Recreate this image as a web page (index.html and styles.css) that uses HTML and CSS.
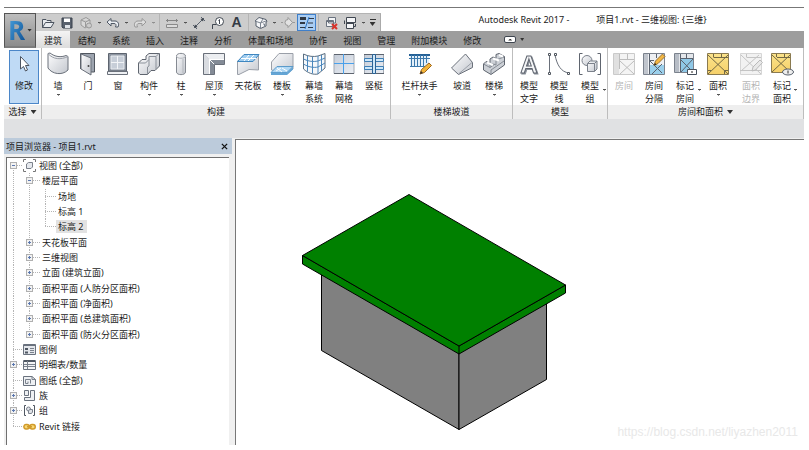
FILE: index.html
```html
<!DOCTYPE html>
<html lang="zh-CN">
<head>
<meta charset="utf-8">
<title>Autodesk Revit 2017</title>
<link rel="stylesheet" href="styles.css">
</head>
<body>
<svg class="defs" aria-hidden="true">
  <defs>
    <linearGradient id="steel" x1="0" y1="0" x2="1" y2="1"><stop offset="0" stop-color="#fdfdfe"/><stop offset="1" stop-color="#c3c7ce"/></linearGradient>
    <linearGradient id="glass" x1="0" y1="0" x2="1" y2="1"><stop offset="0" stop-color="#c4ccd8"/><stop offset="1" stop-color="#eceff4"/></linearGradient>
    <linearGradient id="gold" x1="0" y1="0" x2="0" y2="1"><stop offset="0" stop-color="#fbe38b"/><stop offset="1" stop-color="#f6d069"/></linearGradient>
  </defs>
</svg>
<div class="app">
  <header class="header">
    <button class="app-button" aria-label="应用程序菜单"><span class="logo">R</span><i class="caret big"></i></button>
    <div class="titlebar">
      <div class="qat">
        <button class="q" aria-label="打开"><svg viewBox="0 0 14 14"><path d="M1.500 11.500V3.500H5L6 4.500H10V6.500M1.500 11.500L4.500 6.500H13L10 11.500Z" fill="#e8ebef" stroke="#4b535f"/></svg></button>
        <button class="q" aria-label="保存"><svg viewBox="0 0 14 14"><path d="M2 2H12V12H3L2 11Z" fill="#59616d" stroke="#3a424e"/><path d="M4 2.500H10V6H4Z" fill="#fff"/><path d="M5 9H10V12H5Z" fill="#dfe3e8"/></svg></button>
        <button class="q" aria-label="同步"><svg viewBox="0 0 14 14"><path d="M2 4L7 1.500L11 4V9L6 12L2 9ZM2 4L6.500 6L11 4M6.500 6V11" fill="#d8d8d8" stroke="#999"/><circle cx="10" cy="9.500" r="2.500" fill="#ccc" stroke="#999"/></svg></button>
        <i class="caret"></i>
        <button class="q" aria-label="放弃"><svg viewBox="0 0 14 14"><path d="M1 6L5 2.500V5H9C12 5 13.500 8 12 11H9.500C10.500 9 10 7.500 8 7.500H5V10Z" fill="#eceff3" stroke="#4f5865"/></svg></button>
        <i class="caret"></i>
        <button class="q" aria-label="重做"><svg viewBox="0 0 14 14"><path d="M13 6L9 2.500V5H5C2 5 .5 8 2 11H4.500C3.500 9 4 7.500 6 7.500H9V10Z" fill="#ddd" stroke="#999"/></svg></button>
        <i class="caret dim"></i>
        <i class="sep"></i>
        <button class="q" aria-label="测量"><svg viewBox="0 0 14 14"><path d="M1 4.500H13M2.500 3V6M11.500 3V6" fill="none" stroke="#858585"/><path d="M1.500 8.500H12.500V11.500H1.500Z" fill="#dcdcdc" stroke="#8a8a8a"/></svg></button>
        <i class="caret"></i>
        <button class="q" aria-label="对齐尺寸标注"><svg viewBox="0 0 14 14"><path d="M2.500 11.500L11.500 2.500M1 9L5 13M9 1L13 5" fill="none" stroke="#5a626d"/><path d="M2 12L3 8.500L5.500 11ZM12 2L8.500 3L11 5.500Z" fill="#3f4650"/></svg></button>
        <button class="q" aria-label="按类别标记"><svg viewBox="0 0 14 14"><path d="M1.500 13V8.500H5" fill="none" stroke="#3f4650"/><circle cx="8.500" cy="5.500" r="4" fill="#fff" stroke="#3f4650"/><path d="M7.500 4.500L8.500 3.500V8" stroke="#3f4650" fill="none"/></svg></button>
        <button class="q letter" aria-label="文字">A</button>
        <i class="sep"></i>
        <button class="q" aria-label="默认三维视图"><svg viewBox="0 0 14 14"><path d="M1 5L5 1.500L12 3.500L13 5.500L12 6V10L6.500 12.500L2 10V6Z" fill="#f5f6f8" stroke="#555e6b"/><path d="M1 5L6.500 7L9 3M6.500 7V12.500M6.500 7L12 5M9 8H10.500V11" fill="none" stroke="#7d8590"/></svg></button>
        <i class="caret"></i>
        <button class="q" aria-label="剖面"><svg viewBox="0 0 14 14"><path d="M7 1.500L11.500 6.500L7 11.500V9.500A3 3 0 1 1 7 3.500Z" fill="#e2e2e2" stroke="#999"/><path d="M0 6.500H2M11.500 6.500H14" stroke="#999"/></svg></button>
        <button class="q pressed" aria-label="细线" aria-pressed="true"><svg viewBox="0 0 14 14"><path d="M0 2.500H6" stroke="#303945" stroke-width="3"/><path d="M0 7H5" stroke="#303945" stroke-width="2"/><path d="M0 11.500H5M9 2.500H14M8 7H13M8 11.500H13" stroke="#303945"/><path d="M9 1L5 13" stroke="#2b74c4"/></svg></button>
        <i class="sep"></i>
        <button class="q" aria-label="关闭隐藏窗口"><svg viewBox="0 0 14 14"><path d="M4.500 1.500H11.500V7H4.500ZM2.500 4.500H9.500V10.500H2.500Z" fill="#f4f5f7" stroke="#6a727e"/><path d="M2.500 5.500H9.500" stroke="#6a727e"/><path d="M8 8L13 13M13 8L8 13" stroke="#d7332b" stroke-width="2"/></svg></button>
        <button class="q" aria-label="切换窗口"><svg viewBox="0 0 14 14"><path d="M3.500 1.500H12.500V6.500H3.500Z" fill="#f4f5f7" stroke="#3f4650"/><path d="M1.500 7V4.500M1 7.500H2M12.500 8V10.500H11" fill="none" stroke="#3f4650"/><path d="M3.500 6.500H10.500V12.500H3.500Z" fill="#f4f5f7" stroke="#3f4650"/><path d="M3.500 7.500H10.500" stroke="#3f4650"/></svg></button>
        <i class="caret"></i>
        <button class="q customize" aria-label="自定义快速访问工具栏"><i class="bar"></i><i class="caret big"></i></button>
      </div>
      <div class="title"><span>Autodesk Revit 2017 -</span><span>项目1.rvt - 三维视图: {三维}</span></div>
    </div>
    <nav class="tabs">
      <button class="tab active">建筑</button><button class="tab">结构</button><button class="tab">系统</button><button class="tab">插入</button><button class="tab">注释</button><button class="tab">分析</button><button class="tab">体量和场地</button><button class="tab">协作</button><button class="tab">视图</button><button class="tab">管理</button><button class="tab">附加模块</button><button class="tab">修改</button>
      <button class="minimize" aria-label="最小化功能区"><i class="pill"><i class="up"></i></i><i class="caret big"></i></button>
    </nav>
  </header>

  <main class="ribbon">
    <section class="panel select">
      <div class="tools">
        <button class="tool chosen"><svg viewBox="0 0 24 24"><path d="M8.500 4.500V17L11.500 14.500L13.500 19L15.500 18L13.500 13.500H17Z" fill="#fff" stroke="#4d5561"/></svg><span>修改</span></button>
      </div>
      <h2>选择<i class="caret big"></i></h2>
    </section>
    <section class="panel">
      <div class="tools">
        <button class="tool"><svg viewBox="0 0 24 24"><path d="M2 1.500L4 1C9 5 15 5.500 20 3.500L22 4.500V18C16 24 6 22 2 16Z" fill="url(#steel)" stroke="#6a707a"/><path d="M2 1.500C7 7.500 15 8 22 4.500" fill="none" stroke="#9a9fa8"/></svg><span>墙</span><i class="caret"></i></button>
        <button class="tool"><svg viewBox="0 0 24 24"><path d="M4.500 17V1.500H18.500V20H15" fill="#9da4af" stroke="#50565f"/><path d="M5 2L15 6V23L5 17Z" fill="url(#steel)" stroke="#6a707a"/><circle cx="12.500" cy="14" r="1" fill="#444"/></svg><span>门</span></button>
        <button class="tool"><svg viewBox="0 0 24 24"><path d="M2.500 1.500H20.500V19H2.500Z" fill="#8e96a2" stroke="#5d646f"/><path d="M5 4H18V17H5Z" fill="#c7ced8" stroke="#e9ecf0"/><path d="M11.500 4V17M5 10.500H18" stroke="#f2f4f7"/><path d="M1.500 19.500H21.500V22.500H1.500Z" fill="#eef0f3" stroke="#6a707a"/></svg><span>窗</span></button>
        <button class="tool medium"><svg viewBox="0 0 24 24"><path d="M1.500 11L5 7.500H9V4L12 1.500H22.500V14L18 18.500H14L10.500 22.500H3L1.500 21Z" fill="url(#steel)" stroke="#5f656f" stroke-linejoin="round"/><path d="M1.500 11H8.500L12 7.500V4.500H19L22 1.500M19 4.500V17M12 7.500V14L10.500 15V22" fill="none" stroke="#8b919a"/></svg><span>构件</span><i class="caret"></i></button>
        <button class="tool medium"><svg viewBox="0 0 24 24"><path d="M7.500 4C7.500 .5 16.500 .5 16.500 4V20C16.500 23.500 7.500 23.500 7.500 20Z" fill="url(#steel)" stroke="#858a92"/><path d="M7.500 4C7.500 7 16.500 7 16.500 4M14 7V21" fill="none" stroke="#b3b7bd"/></svg><span>柱</span><i class="caret"></i></button>
        <button class="tool large"><svg viewBox="0 0 24 24"><path d="M1.500 1.500H22.500V12.500H12.500V22.500H1.500Z" fill="#b0b5bd"/><path d="M1.500 1.500L7.500 7.500H22.500V1.500Z" fill="#eceef1"/><path d="M1.500 1.500L7.500 7.500V22.500H1.500Z" fill="#d9dce1"/><path d="M7.500 7.500H22V12.500H12.500V22H7.500Z" fill="#838b96"/><path d="M7.500 7.500L12.500 12.500M7.500 22V7.500H22" stroke="#fff" fill="none"/><path d="M1.500 1.500H22.500V12.500H12.500V22.500H1.500Z" fill="none" stroke="#6a707a"/></svg><span>屋顶</span><i class="caret"></i></button>
        <button class="tool large"><svg viewBox="0 0 24 24"><path d="M1.500 9V22.500H3L13 17.500L22.500 18V3Z" fill="url(#steel)" stroke="#9a9fa8"/><path d="M8 2.500H23L17 9.500H1.500Z" fill="#9fcdf0" stroke="#3e86c0"/><path d="M13 3L8 9M18 3L12 9M5 6.500H20" stroke="#fff"/></svg><span>天花板</span></button>
        <button class="tool large"><svg viewBox="0 0 24 24"><path d="M1.500 18V10L9 1.500H23V17L17 22Z" fill="url(#steel)" stroke="#9a9fa8"/><path d="M7 14.500H23L17 20.500H1Z" fill="#b1d8f4" stroke="#5c9bca"/><path d="M1 20.500V23H17L23 17.500V15L17 20.500Z" fill="#64a5d5"/><path d="M7 16L12 20M12 16L17 19M6 19L11 16" stroke="#fff"/></svg><span>楼板</span><i class="caret"></i></button>
        <button class="tool"><svg viewBox="0 0 24 24"><path d="M1.500 2C6 4.500 12 5 16 4L23 1.500V16L16 22C11 23 6 21 1.500 17Z" fill="#f5f8fb" stroke="#5b6f82"/><path d="M16 4V22M1.500 7C6 9.500 12 10 16 9L23 6M1.500 12C6 15 12 16 16 15L23 11M5.500 4V19.500M10.500 5V21.500M19.500 3V19" fill="none" stroke="#4a86bb"/></svg><span>幕墙<br>系统</span></button>
        <button class="tool"><svg viewBox="0 0 24 24"><path d="M2 2.500H22V21.500H2Z" fill="url(#glass)" stroke="#a3a9b2"/><path d="M2 2.500H22M2 21.500H22" stroke="#5d646f"/><path d="M11.500 2V22M2 11.500H22" stroke="#4aa0ea"/></svg><span>幕墙<br>网格</span></button>
        <button class="tool"><svg viewBox="0 0 24 24"><path d="M2.500 2.500H21.500V21.500H2.500Z" fill="url(#glass)" stroke="#a3a9b2"/><path d="M2 2.500H22M2 21.500H22" stroke="#5d646f"/><path d="M2.500 6.500H21.500V9.500H2.500ZM2.500 14.500H21.500V17.500H2.500Z" fill="#cfe7f8" stroke="#3f7fb5"/><path d="M10.500 2.500H13.500V21.500H10.500Z" fill="#cfe7f8" stroke="#2b6294"/></svg><span>竖梃</span></button>
      </div>
      <h2>构建</h2>
    </section>
    <section class="panel">
      <div class="tools">
        <button class="tool wide"><svg viewBox="0 0 24 24"><path d="M2 3H21V15H2Z" fill="#e4f0fa"/><path d="M1 3H22" stroke="#246096" stroke-width="2"/><path d="M1 6.500H22M2 14.500H17M3.500 3V15M6.500 3V15M9.500 3V15M12.500 3V15M15.500 3V15M18.500 3V11" stroke="#3b78ab"/><path d="M12 22L13.500 17.500L21 11L23.500 13.500L16.500 20.500Z" fill="#f3b437" stroke="#9c651f"/><path d="M12 22L13 19L15 21Z" fill="#333"/></svg><span>栏杆扶手</span><i class="caret"></i></button>
        <button class="tool"><svg viewBox="0 0 24 24"><path d="M1.500 16L15.500 2L22.500 10.500V15.500L8.500 22.500Z" fill="url(#steel)" stroke="#6a707a" stroke-linejoin="round"/><path d="M8.500 22L22 10.500" stroke="#9a9fa8"/></svg><span>坡道</span></button>
        <button class="tool large"><svg viewBox="0 0 24 24"><path d="M1.500 12L4 9.500L8 11V7L11 5L14 6.500V2.500L17 1.500L22.500 4.500V13L9 22.500L1.500 18Z" fill="#ccd0d6" stroke="#5f656f" stroke-linejoin="round"/><path d="M1.500 12L8 15.500V11L14 13V8L22 5M8 15.500L13 12M9 22V18L22 9" fill="none" stroke="#868c95"/><path d="M5 10.500L11 13M11 6.500L17 8.500M17 3L21 4.500" stroke="#fff" stroke-width="2"/></svg><span>楼梯</span><i class="caret"></i></button>
      </div>
      <h2>楼梯坡道</h2>
    </section>
    <section class="panel">
      <div class="tools">
        <button class="tool"><svg class="solid" viewBox="0 0 24 24"><text x="12" y="21">A</text></svg><span>模型<br>文字</span></button>
        <button class="tool"><svg viewBox="0 0 24 24"><path d="M2.500 3V21M8 3C10 13 14 20 22 21" fill="none" stroke="#6a707a"/><path d="M1.500 1.500H3.500V3.500H1.500ZM1.500 20.500H3.500V22.500H1.500ZM7.500 1.500H9.500V3.500H7.500ZM20.500 20.500H22.500V22.500H20.500Z" fill="#fff" stroke="#50565f"/></svg><span>模型<br>线</span></button>
        <button class="tool medium side"><svg viewBox="0 0 24 24"><path d="M4.500 1.500H1.500V22.500H4.500M19.500 1.500H22.500V22.500H19.500" fill="none" stroke="#5f656f"/><circle cx="9" cy="8.500" r="5" fill="url(#steel)" stroke="#7b818b"/><path d="M9.500 11.500L12 9H19V17L16.500 19.500H9.500ZM9.500 11.500H16.500V19.500M16.500 11.500L19 9" fill="url(#steel)" stroke="#7b818b"/></svg><span>模型<br>组</span><i class="caret"></i></button>
      </div>
      <h2>模型</h2>
    </section>
    <section class="panel last">
      <div class="tools">
        <button class="tool" disabled><svg viewBox="0 0 24 24"><path d="M1.500 1.500H22.500V22.500H1.500Z" fill="#f4f4f4" stroke="#cacaca"/><path d="M2 2H7V22H2Z" fill="#e0e0e0"/><path d="M7.500 2V17M7.500 7.500H22M8 9L22 22M22 9L8 22M15.500 2V8" fill="none" stroke="#bdbdbd"/></svg><span>房间</span></button>
        <button class="tool"><svg viewBox="0 0 24 24"><path d="M1.500 1.500H22.500V22.500H1.500Z" fill="#eef0f3" stroke="#7b828d"/><path d="M2 2H6V22H2Z" fill="#c0c5cd"/><path d="M7 13H22V22H7Z" fill="#9bd0ec"/><path d="M7.500 2V22M7 8.500H12M8 9L20 21M20 12L10 22M14.500 2V6" fill="none" stroke="#5a626e"/><path d="M12 13.500L13.500 9L20.500 2L23 4.500L16 11.500Z" fill="#f3b743" stroke="#9a7434"/><path d="M12 13.500L13 11L14.500 12.500Z" fill="#222"/></svg><span>房间<br>分隔</span></button>
        <button class="tool medium side"><svg viewBox="0 0 24 24"><path d="M1.500 1.500H20.500V20.500H1.500Z" fill="#e4e7eb" stroke="#7b828d"/><path d="M2 2H6V20H2Z" fill="#b7bdc6"/><path d="M8 7H20V20H8Z" fill="#8fc8e7"/><path d="M7.500 2V20M7 6.500H20M8 8L20 20M20 7L8 20M13.500 2V7" fill="none" stroke="#5a626e"/><path d="M14.500 17.500H23.500V22.500H14.500Z" fill="#fff" stroke="#47505c"/><path d="M19 19V21" stroke="#222"/></svg><span>标记<br>房间</span><i class="caret"></i></button>
        <button class="tool large"><svg viewBox="0 0 24 24"><path d="M1.500 1.500H22.500V22.500H1.500Z" fill="url(#gold)" stroke="#8a7a50"/><path d="M7.500 2V5M7.500 5.500H22M15.500 2V5M2 22L22 3M2 3L22 22M2 18.500H5M22 18.500H18.500V22" fill="none" stroke="#736944"/></svg><span>面积</span><i class="caret"></i></button>
        <button class="tool medium" disabled><svg viewBox="0 0 24 24"><path d="M1.500 1.500H22.500V22.500H1.500Z" fill="#f2f2f2" stroke="#d6d6d6"/><path d="M7.500 2V5M7.500 5.500H22M2 19L20 3M2 3L22 22M1 18.500H22" fill="none" stroke="#c4c4c4"/><path d="M13 19L14 15L21 8L23.500 10.500L16.500 18Z" fill="#e8e8e8" stroke="#b9b9b9"/></svg><span>面积<br>边界</span></button>
        <button class="tool side"><svg viewBox="0 0 24 24"><path d="M1.500 1.500H20.500V20.500H1.500Z" fill="url(#gold)" stroke="#8a7a50"/><path d="M6.500 2V5M7 5.500H20M14.500 2V5M2 20L20 3M2 3L20 20" fill="none" stroke="#736944"/><ellipse cx="18" cy="20" rx="5.500" ry="3" fill="#eee" stroke="#59616d"/><path d="M18 18.500V21.500" stroke="#333"/></svg><span>标记<br>面积</span><i class="caret"></i></button>
      </div>
      <h2>房间和面积<i class="caret big"></i></h2>
    </section>
  </main>

  <div class="options"></div>

  <div class="workspace">
    <aside class="browser">
      <div class="browser-head"><span>项目浏览器 - 项目1.rvt</span><button aria-label="关闭"><svg viewBox="0 0 8 8"><path d="M1 1L7 7M7 1L1 7" stroke="#111" stroke-width="1.500"/></svg></button></div>
      <ul class="tree" role="tree">
        <li role="treeitem" aria-level="1" aria-expanded="true"><i class="node first"><button class="exp minus" aria-label="折叠"></button></i><svg viewBox="0 0 13 13"><path d="M3 .5H.5V3M10 .5H12.500V3M3 12.500H.5V10M10 12.500H12.500V10" fill="none" stroke="#777"/><path d="M3.500 5L5.500 3.500H9.500V8L8 9.500H3.500Z" fill="#e6e9ee" stroke="#7b818b"/></svg><span>视图 (全部)</span></li>
        <li role="treeitem" aria-level="2" aria-expanded="true"><i class="pass"></i><i class="node long"><button class="exp minus" aria-label="折叠"></button></i><span>楼层平面</span></li>
        <li role="treeitem" aria-level="3"><i class="pass"></i><i class="pass"></i><i class="node long"></i><span>场地</span></li>
        <li role="treeitem" aria-level="3"><i class="pass"></i><i class="pass"></i><i class="node long"></i><span>标高 1</span></li>
        <li role="treeitem" aria-level="3" aria-selected="true"><i class="pass"></i><i class="pass"></i><i class="node long end"></i><span class="picked">标高 2</span></li>
        <li role="treeitem" aria-level="2"><i class="pass"></i><i class="node long"><button class="exp" aria-label="展开"></button></i><span>天花板平面</span></li>
        <li role="treeitem" aria-level="2"><i class="pass"></i><i class="node long"><button class="exp" aria-label="展开"></button></i><span>三维视图</span></li>
        <li role="treeitem" aria-level="2"><i class="pass"></i><i class="node long"><button class="exp" aria-label="展开"></button></i><span>立面 (建筑立面)</span></li>
        <li role="treeitem" aria-level="2"><i class="pass"></i><i class="node long"><button class="exp" aria-label="展开"></button></i><span>面积平面 (人防分区面积)</span></li>
        <li role="treeitem" aria-level="2"><i class="pass"></i><i class="node long"><button class="exp" aria-label="展开"></button></i><span>面积平面 (净面积)</span></li>
        <li role="treeitem" aria-level="2"><i class="pass"></i><i class="node long"><button class="exp" aria-label="展开"></button></i><span>面积平面 (总建筑面积)</span></li>
        <li role="treeitem" aria-level="2"><i class="pass"></i><i class="node long end"><button class="exp" aria-label="展开"></button></i><span>面积平面 (防火分区面积)</span></li>
        <li role="treeitem" aria-level="1"><i class="node"></i><svg viewBox="0 0 13 13"><path d="M.5 1.500H12.500V11.500H.5Z" fill="#e3e6eb" stroke="#6a727e"/><path d="M1 2H12" stroke="#6a727e" stroke-width="2"/><path d="M2 5H5V7H2ZM2 8.500H5V10.500H2Z" fill="#4f5762"/><path d="M7 5.500H11M7 7.500H11M7 9.500H11" stroke="#7b828d"/></svg><span>图例</span></li>
        <li role="treeitem" aria-level="1"><i class="node"><button class="exp" aria-label="展开"></button></i><svg viewBox="0 0 13 13"><path d="M.5 2.500H12.500V11.500H.5Z" fill="#f3f4f6" stroke="#6a727e"/><path d="M1 3H12" stroke="#4f5762" stroke-width="2"/><path d="M1 6.500H12M1 8.500H12M4.500 3V11" stroke="#7b828d"/></svg><span>明细表/数量</span></li>
        <li role="treeitem" aria-level="1"><i class="node"></i><svg viewBox="0 0 13 13"><path d="M.5 2.500H9L12.500 5.500V11.500H.5Z" fill="#eef0f3" stroke="#6a727e"/><path d="M9 2.500V5.500H12.500M2.500 5.500H7.500V9.500M2.500 5.500V9.500H5V7.500" fill="none" stroke="#7b828d"/></svg><span>图纸 (全部)</span></li>
        <li role="treeitem" aria-level="1"><i class="node"><button class="exp" aria-label="展开"></button></i><svg viewBox="0 0 13 13"><path d="M1.500 1.500H5.500V6.500H1.500ZM7.500 1.500H11.500V11.500H1.500V8.500H7.500Z" fill="#eef0f3" stroke="#6a727e"/></svg><span>族</span></li>
        <li role="treeitem" aria-level="1"><i class="node"><button class="exp" aria-label="展开"></button></i><svg viewBox="0 0 13 13"><path d="M3 1.500H1.500V11.500H3M10 1.500H11.500V11.500H10" fill="none" stroke="#4f5762"/><circle cx="5.500" cy="5" r="2" fill="#dfe2e7" stroke="#7b828d"/><path d="M5.500 6.500L7 5.500H9.500V8L8.500 9.500H5.500Z" fill="#dfe2e7" stroke="#7b828d"/></svg><span>组</span></li>
        <li role="treeitem" aria-level="1"><i class="node end"></i><svg viewBox="0 0 13 13"><path d="M1 6.500A2 2 0 0 1 3 4.500H4A2 2 0 0 1 4 9H3A2 2 0 0 1 1 6.500ZM7 6.500A2 2 0 0 1 9 4.500H10A2 2 0 0 1 10 9H9A2 2 0 0 1 7 6.500ZM4 6.700H9" fill="#f8d774" stroke="#d09a2a" stroke-width="1.500"/></svg><span>Revit 链接</span></li>
      </ul>
    </aside>
    <section class="canvas">
      <svg class="model" viewBox="236 140 568 305" preserveAspectRatio="xMidYMid meet" role="img" aria-label="三维模型">
        <g stroke="#000" stroke-linejoin="round">
          <path d="M321.500 270V350.500L459 429.500V348Z" fill="#808080"/>
          <path d="M459 348V429.500L546.500 379.500V298Z" fill="#808080"/>
          <path d="M302.500 255.500L459 346L565.500 285V293L459 354L302.500 264Z" fill="#008000"/>
          <path d="M409 194.500L565.500 285L459 346L302.500 255.500Z" fill="#008000"/>
          <path d="M459 346V354"/>
        </g>
      </svg>
      <span class="watermark">https://blog.csdn.net/liyazhen2011</span>
    </section>
  </div>
</div>
</body>
</html>
```
FILE: styles.css
```css
* { box-sizing: border-box; }
body {
  margin: 0;
  background: #fff;
  color: #1a1a1a;
  font: 9px/13px "Noto Sans", "Noto Sans CJK SC", sans-serif;
}
button {
  margin: 0;
  padding: 0;
  border: 0;
  background: none;
  color: inherit;
  font: inherit;
}
svg { display: block; flex: none; }
.defs { position: absolute; width: 0; height: 0; }

.app {
  display: flex;
  flex-direction: column;
  min-height: 100vh;
  padding: 7px 5px 5px 4px;
}

.caret {
  flex: none;
  width: 8px;
  height: 2px;
  background:
    linear-gradient(#555, #555) 50% 0 / 3px 1px no-repeat,
    linear-gradient(#999, #999) 50% 1px / 1px 1px no-repeat;
}
.caret.dim { opacity: .5; }
.caret.big {
  width: 6px;
  height: 4px;
  background: #333;
  clip-path: polygon(0 0, 100% 0, 50% 100%);
}

/* Title bar and tabs */
.header {
  display: grid;
  grid-template-columns: 32px 1fr;
  grid-template-rows: 23px 17px;
  border-top: 1px solid #777;
}
.app-button {
  grid-row: 1 / 3;
  margin-top: 5px;
  display: flex;
  align-items: center;
  justify-content: center;
  gap: 2px;
  background: linear-gradient(#bdbdbd, #8c8c8c);
  border: 1px solid #555;
  border-bottom: 2px solid #7d7d7d;
}
.app-button .caret { width: 5px; height: 3px; }
.logo {
  font: bold 26px/28px "Open Sans", sans-serif;
  color: #1b6cb4;
  background: linear-gradient(120deg, #4ba3e0, #0d4f92);
  background-clip: text;
  -webkit-text-fill-color: transparent;
}
.titlebar { display: flex; align-items: stretch; }
.qat {
  display: flex;
  align-items: center;
  margin-top: 5px;
  padding: 0 2px;
  background: #cdcdcd;
  border-top: 1px solid #b4b4b4;
  border-right: 1px solid #aaa;
}
.q {
  display: flex;
  align-items: center;
  justify-content: center;
  width: 19px;
  height: 17px;
}
.q svg { width: 14px; height: 14px; }
.q.letter { font: bold 14px/17px "Liberation Sans", sans-serif; color: #343b45; }
.q.pressed { background: #a9cdf3; border: 1px solid #3f7fca; }
.q.customize { flex-direction: column; gap: 2px; width: 11px; }
.bar { width: 6px; height: 1px; background: #333; }
.sep {
  width: 5px;
  height: 17px;
  background: linear-gradient(#b5b5b5, #b5b5b5) center / 1px 100% no-repeat;
}
.title {
  flex: 1;
  display: flex;
  align-items: center;
  justify-content: center;
  gap: 27px;
  white-space: nowrap;
}
.tabs {
  display: flex;
  align-items: stretch;
  background: #9d9d9d;
}
.tab { padding: 2px 8px 0; }
.tab.active { background: linear-gradient(#f4f4f4, #dcdcdc); }
.minimize { display: flex; align-items: center; gap: 4px; margin-left: 15px; }
.pill {
  display: grid;
  place-items: center;
  width: 12px;
  height: 7px;
  border: 1px solid #3f4650;
  border-radius: 2px;
  background: #fff;
}
.up { width: 4px; height: 2px; background: #333; clip-path: polygon(50% 0, 100% 100%, 0 100%); }
.minimize .caret { width: 4px; height: 3px; }

/* Ribbon */
.ribbon { display: flex; background: #fff; }
.panel {
  display: flex;
  flex-direction: column;
  padding: 0 1px;
  border-right: 1px solid #bdbdbd;
}
.panel.select { padding: 0 2px 0 5px; }
.panel.last { flex: 1; }
.tools { display: flex; flex: 1; height: 58px; }
.panel h2 {
  display: flex;
  align-items: center;
  justify-content: center;
  gap: 4px;
  margin: 0 -1px;
  font-size: 9px;
  line-height: 14px;
  font-weight: 400;
  background: #eeeeee;
}
.select h2 { margin: 0 -2px 0 -5px; }
.tool {
  position: relative;
  display: flex;
  flex-direction: column;
  align-items: center;
  width: 30px;
  padding-top: 4px;
  white-space: nowrap;
}
.tool svg { width: 24px; height: 24px; margin-bottom: 3px; }
.tool > .caret { margin-top: 2px; }
.tool.medium { width: 32px; }
.tool.large { width: 34px; }
.tool.wide { width: 55px; }
.tool.side > .caret { position: absolute; right: -2px; bottom: 14px; }
.tool.chosen {
  margin: 2px 0 1px;
  padding-top: 2px;
  background: #bfdaf5;
  outline: 1px solid #4b86c8;
  outline-offset: -1px;
}
.tool:disabled { color: #b5b5b5; }
.solid {
  font: bold 24px/24px "Liberation Sans", sans-serif;
  text-anchor: middle;
  fill: #f4f5f7;
  stroke: #5f656f;
  filter: drop-shadow(1px 1px 0 #8b919a);
}

.options { height: 19px; background: #e0e1e3; }

/* Project browser and drawing area */
.workspace { display: flex; flex: 1; background: #f0f0f0; }
.browser {
  display: flex;
  flex-direction: column;
  flex: none;
  width: 228px;
}
.browser-head {
  display: flex;
  align-items: center;
  justify-content: space-between;
  height: 16px;
  padding: 0 4px 0 2px;
  background: #bccbdb;
}
.browser-head button { display: grid; place-items: center; width: 8px; height: 12px; }
.browser-head svg { width: 7px; height: 7px; }
.tree {
  flex: 1;
  display: grid;
  grid-auto-rows: 1fr;
  margin: 3px 3px 0 2px;
  padding: 0 0 11px;
  list-style: none;
  background: #fff;
  border-top: 1px solid #6f6f6f;
  border-left: 1px solid #6f6f6f;
}
.tree li { display: flex; align-items: stretch; white-space: nowrap; }
.tree li > span { align-self: center; padding: 0 2px; }
.tree li > svg { align-self: center; width: 13px; height: 13px; margin-right: 1px; }
.tree .picked { padding-right: 3px; background: #e2e2e2; }
.pass,
.node {
  display: flex;
  align-items: center;
  width: 16px;
  padding-left: 3px;
  --v: repeating-linear-gradient(#b5b5b5 0 1px, transparent 1px 2px);
  --h: repeating-linear-gradient(90deg, #b5b5b5 0 1px, transparent 1px 2px);
  background: var(--v) 6px 0 / 1px 100% no-repeat;
}
.node { background: var(--v) 6px 0 / 1px 100% no-repeat, var(--h) 6px 50% / 100% 1px no-repeat; }
.node.end { background: var(--v) 6px 0 / 1px 50% no-repeat, var(--h) 6px 50% / 100% 1px no-repeat; }
.node.first { background: var(--v) 6px 100% / 1px 50% no-repeat, var(--h) 6px 50% / 100% 1px no-repeat; }
.node.long { width: 17px; }
.exp {
  width: 7px;
  height: 7px;
  border: 1px solid #b0b0b0;
  background:
    linear-gradient(#5b78b0, #5b78b0) center / 3px 1px no-repeat,
    linear-gradient(#5b78b0, #5b78b0) center / 1px 3px no-repeat,
    #f2f2f2;
}
.exp.minus { background: linear-gradient(#5b78b0, #5b78b0) center / 3px 1px no-repeat, #f2f2f2; }
.canvas {
  position: relative;
  flex: 1;
  display: flex;
  margin: 1px 0 0 3px;
  border-top: 1px solid #777;
  border-left: 1px solid #777;
  background: #fff;
}
.model { flex: 1; width: 100%; height: 305px; }
.watermark {
  position: absolute;
  right: 6px;
  bottom: 6px;
  font: 12px/14px "Liberation Sans", sans-serif;
  color: #e8e8e8;
}
```
